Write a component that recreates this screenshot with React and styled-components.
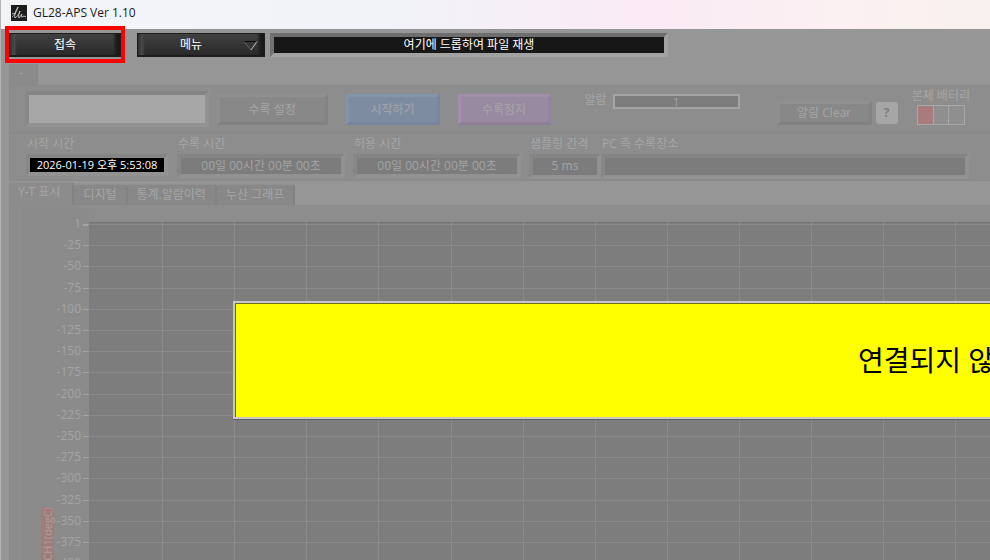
import React from 'react';
import styled, { createGlobalStyle, css } from 'styled-components';

const GlobalStyle = createGlobalStyle`
  * {
    box-sizing: border-box;
  }

  body {
    margin: 0;
    background: #969696;
    overflow: hidden;
  }

  button,
  input {
    font: inherit;
    color: inherit;
    margin: 0;
  }
`;

const Window = styled.div`
  display: flex;
  flex-direction: column;
  height: 100vh;
  overflow: hidden;
  border-left: 1px solid #b4b4b4;
  background: #969696;
  color: #a6a6a6;
  font-family: 'Open Sans', 'Noto Sans CJK KR', sans-serif;
  font-size: 12px;
  line-height: 16px;
`;

const TitleBar = styled.header`
  display: flex;
  flex: none;
  align-items: center;
  gap: 6px;
  height: 29px;
  padding: 0 10px 4px;
  background: linear-gradient(90deg, #f3f4f8 0%, #f1f3f8 40%, #faeaf4 65%, #fbf0f2 85%, #f8f1ee 100%);
  color: #1b1b1b;

  h1 {
    margin: 0;
    font-size: 12px;
    font-weight: 400;
  }
`;

const Toolbar = styled.div`
  display: flex;
  flex: none;
  align-items: flex-start;
  height: 35px;
  padding: 4px 8px;
`;

const DarkButton = styled.button`
  display: flex;
  align-items: center;
  justify-content: center;
  width: ${(p) => p.$width}px;
  height: 24px;
  padding: 0;
  border: 1px solid #1c1c1c;
  border-bottom-width: 2px;
  background: linear-gradient(90deg, #303030 0, #4a4a4a 4px, transparent 7px),
    linear-gradient(270deg, #161616 0, #1e1e1e 4px, transparent 7px),
    linear-gradient(#404040, #2a2a2a);
  color: #fff;
`;

const Highlight = styled.div`
  position: relative;
  margin-right: 16px;

  &::after {
    content: '';
    position: absolute;
    inset: -7px -4px -6px;
    border: 4px solid #fe0000;
    pointer-events: none;
  }
`;

const MenuLabel = styled.span`
  flex: 1;
`;

const DropZone = styled.div`
  width: 398px;
  height: 24px;
  margin-left: 5px;
  border: 4px solid;
  border-color: #6e6e6e #a2a2a2 #a2a2a2 #727272;
  background: #171717;
  color: #fff;
  line-height: 15px;
  text-align: center;
`;

const Collapse = styled.button`
  flex: none;
  width: 29px;
  height: 21px;
  margin-left: 8px;
  padding: 0 4px 3px 0;
  border: 0;
  border-right: 1px solid #878787;
  background: #8b8b8b;
`;

const Panel = styled.section`
  flex: none;
  margin-left: 8px;
  border: 1px solid #8a8a8a;
  border-width: 1px 0 1px 1px;
  background: #8d8d8d;
`;

const ControlRow = styled(Panel)`
  display: flex;
  align-items: flex-start;
  height: 48px;
  padding: 5px 20px 0 15px;
`;

const inset = css`
  border: 4px solid;
  border-color: #858585 #929292 #929292 #878787;
`;

const NameInput = styled.input`
  width: 184px;
  height: 36px;
  margin-right: 8px;
  padding: 0 4px;
  ${inset}
  background: #a7a7a7;
`;

const PushButton = styled.button`
  flex: none;
  width: ${(p) => p.$width}px;
  height: ${(p) => p.$height || 31}px;
  margin: ${(p) => p.$top || 3}px ${(p) => p.$gap || 0}px 0 0;
  padding: 0;
  border: 3px solid;
  border-color: ${(p) => p.$edge || '#909090 #838383 #808080 #8f8f8f'};
  background: ${(p) => p.$color || '#888'};
`;

const AlarmGroup = styled.div`
  display: flex;
  flex: none;
  align-items: flex-start;
  gap: 6px;
  margin: 1px 37px 0 0;
  white-space: nowrap;
`;

const AlarmInput = styled.input`
  width: 127px;
  height: 15px;
  margin-top: 2px;
  padding: 0;
  border: 2px solid #a4a4a4;
  background: #7d7d7d;
  font-size: 11px;
  line-height: 11px;
  text-align: center;
`;

const HelpButton = styled.button`
  flex: none;
  width: 22px;
  height: 22px;
  margin: 11px 14px 0 4px;
  padding: 0;
  border: 0;
  border-radius: 3px;
  background: #a6a6a6;
  color: #7e7e7e;
  font-weight: 700;
`;

const Battery = styled.div`
  display: flex;
  flex-direction: column;
  align-items: center;
  white-space: nowrap;
  margin-top: -3px;
`;

const Cells = styled.div`
  display: flex;
  width: 48px;
  height: 20px;
  margin-top: 1px;
  border: 1px solid #a8a8a8;
`;

const Cell = styled.span`
  flex: 1;
  background: ${(p) => (p.$low ? '#a87c7c' : '#8f8f8f')};

  & + & {
    border-left: 1px solid #a8a8a8;
  }
`;

const InfoRow = styled(Panel)`
  display: grid;
  grid-template-columns: 151px 176px 176px 72px 1fr;
  height: 48px;
  padding: 2px 21px 0 16px;
`;

const InfoField = styled.div`
  display: flex;
  flex-direction: column;

  label {
    padding-left: 1px;
    white-space: nowrap;
  }

  input {
    width: ${(p) => (p.$width ? `${p.$width}px` : '100%')};
    height: ${(p) => p.$height || 24}px;
    margin-top: 2px;
    padding: 0 0 3px;
    ${inset}
    background: ${(p) => (p.$live ? '#000' : '#7c7c7c')};
    color: ${(p) => (p.$live ? '#fff' : '#a4a4a4')};
    font-size: ${(p) => (p.$live ? 11 : 12)}px;
    line-height: 13px;
    text-align: center;
  }
`;

const Tabs = styled.div`
  display: flex;
  flex: none;
  align-items: flex-end;
  height: 24px;
  margin-left: 8px;
`;

const Tab = styled.button`
  height: ${(p) => (p.$active ? 23 : 21)}px;
  padding: ${(p) => (p.$active ? '0 12px 4px 9px' : '0 9px')};
  border: 0;
  border-right: 2px solid #828282;
  border-top: 1px solid #909090;
  border-radius: 3px 3px 0 0;
  background: ${(p) => (p.$active ? '#8c8c8c' : '#888')};
  white-space: nowrap;
`;

const GraphPanel = styled.main`
  position: relative;
  display: flex;
  flex: 1;
  min-height: 0;
  margin-left: 8px;
  padding: 4px 0 0 12px;
  border-left: 1px solid #8a8a8a;
  background: #8d8d8d;
`;

const Axis = styled.div`
  display: flex;
  flex: none;
  justify-content: flex-end;
  width: 67px;
  background: #8b8b8b;
`;

const AxisName = styled.div`
  height: 56px;
  margin: 298px auto 0 19px;
  background: #a07c7c;
  color: #b09c9c;
  font-size: 11px;
  line-height: 13px;
  white-space: nowrap;
  writing-mode: sideways-lr;
  text-align: right;
`;

const Scale = styled.svg`
  flex: none;
  width: 34px;
  height: 380px;
  fill: #a4a4a4;
`;

const Plot = styled.svg`
  flex: 1;
  min-width: 0;
  height: 380px;
  margin-top: 13px;
  background: #7d7d7d;
`;

const Notice = styled.div`
  position: absolute;
  top: 96px;
  left: 223px;
  right: -2px;
  display: flex;
  align-items: center;
  justify-content: flex-end;
  height: 118px;
  border: 2px solid #c8c8c8;
  box-shadow: inset 1px 1px 0 #6c6c20, 0 1px 0 #606060;
  background: #ff0;
  color: #000;
  font-size: 28px;
  line-height: 40px;
  overflow: hidden;
  white-space: nowrap;

  span {
    margin-right: -4px;
  }
`;

const SCALE_STEP = 21.2;
const GRID_STEP = 72.1;
const scale = Array.from({ length: 17 }, (_, i) => (i === 0 ? '1' : String(-25 * i)));
const columns = Array.from({ length: 40 }, (_, i) => i + 1);

const infoFields = [
  { id: 'start', label: '시작 시간', value: '2026-01-19 오후 5:53:08', width: 142, height: 22, live: true },
  { id: 'elapsed', label: '수록 시간', value: '00일 00시간 00분 00초', width: 168 },
  { id: 'allowed', label: '허용 시간', value: '00일 00시간 00분 00초', width: 168 },
  { id: 'sampling', label: '샘플링 간격', value: '5 ms', height: 25 },
  { id: 'folder', label: 'PC 측 수록장소', value: '', height: 25 },
];

const tabs = ['Y-T 표시', '디지털', '통계.알람이력', '누산 그래프'];

function Logo() {
  return (
    <svg width="16" height="16" viewBox="0 0 16 16" aria-hidden="true">
      <rect width="16" height="16" fill="#1c1c1c" />
      <path
        d="M1 12 C3 11 6 6 7 2 C5 5 3 10 4 13 C6 12 8 9 9 6 C8 9 7 11 8 13 C9 12 10 10 11 9 C10 11 10 12 11 12 C12 12 12 11 13 11 L15 12 M1 9 L5 8"
        fill="none"
        stroke="#cfcfcf"
        strokeWidth="0.9"
      />
    </svg>
  );
}

function Graph() {
  return (
    <>
      <Axis>
        <AxisName>CH1(degC)</AxisName>
        <Scale>
          {scale.map((value, i) => {
            const y = Math.round(15 + i * SCALE_STEP);
            return (
              <g key={value}>
                <text x="26" y={y + 4} textAnchor="end">
                  {value}
                </text>
                <rect x="28" y={y} width="5" height={i === 0 ? 2 : 1} />
              </g>
            );
          })}
        </Scale>
      </Axis>
      <Plot>
        <rect width="100%" height="1" fill="#747474" />
        {scale.map((value, i) => (
          <rect key={value} y={Math.round(2 + i * SCALE_STEP)} width="100%" height="1" fill="#8a8a8a" />
        ))}
        {columns.map((n) => (
          <rect key={n} x={Math.round(n * GRID_STEP + 1)} width="1" height="100%" fill="#8a8a8a" />
        ))}
      </Plot>
    </>
  );
}

function App() {
  return (
    <Window>
      <GlobalStyle />
      <TitleBar>
        <Logo />
        <h1>GL28-APS Ver 1.10</h1>
      </TitleBar>
      <Toolbar>
        <Highlight>
          <DarkButton $width={112}>접속</DarkButton>
        </Highlight>
        <DarkButton $width={128} aria-haspopup="menu">
          <MenuLabel>메뉴</MenuLabel>
          <svg width="20" height="14" viewBox="0 0 20 14" aria-hidden="true">
            <path d="M0 3.5 H13" fill="none" stroke="#080808" />
            <path d="M0 3.5 L7 12" fill="none" stroke="#707070" strokeWidth="0.8" />
            <path d="M13 3.5 L7 12" fill="none" stroke="#c4c4c4" />
          </svg>
        </DarkButton>
        <DropZone>여기에 드롭하여 파일 재생</DropZone>
      </Toolbar>
      <Collapse>-</Collapse>
      <ControlRow>
        <NameInput aria-label="이름" />
        <PushButton $width={111} $gap={18}>
          수록 설정
        </PushButton>
        <PushButton $width={94} $gap={18} $color="#7d8ca1" $edge="#8396a9 #7786a0 #76859b #8193a8">
          시작하기
        </PushButton>
        <PushButton $width={93} $gap={34} $color="#988aa1" $edge="#a08fa9 #9283a0 #8e8098 #a090a8">
          수록정지
        </PushButton>
        <AlarmGroup>
          <label htmlFor="alarm">알람</label>
          <AlarmInput id="alarm" value="1" readOnly />
        </AlarmGroup>
        <PushButton $width={95} $height={24} $top={10}>
          알람 Clear
        </PushButton>
        <HelpButton>?</HelpButton>
        <Battery>
          <span>본체 배터리</span>
          <Cells>
            <Cell $low />
            <Cell />
            <Cell />
          </Cells>
        </Battery>
      </ControlRow>
      <InfoRow>
        {infoFields.map((f) => (
          <InfoField key={f.id} $width={f.width} $height={f.height} $live={f.live}>
            <label htmlFor={f.id}>{f.label}</label>
            <input id={f.id} value={f.value} readOnly />
          </InfoField>
        ))}
      </InfoRow>
      <Tabs role="tablist">
        {tabs.map((name, i) => (
          <Tab key={name} role="tab" aria-selected={i === 0} $active={i === 0}>
            {name}
          </Tab>
        ))}
      </Tabs>
      <GraphPanel>
        <Graph />
        <Notice role="status">
          <span>연결되지 않</span>
        </Notice>
      </GraphPanel>
    </Window>
  );
}

export default App;
